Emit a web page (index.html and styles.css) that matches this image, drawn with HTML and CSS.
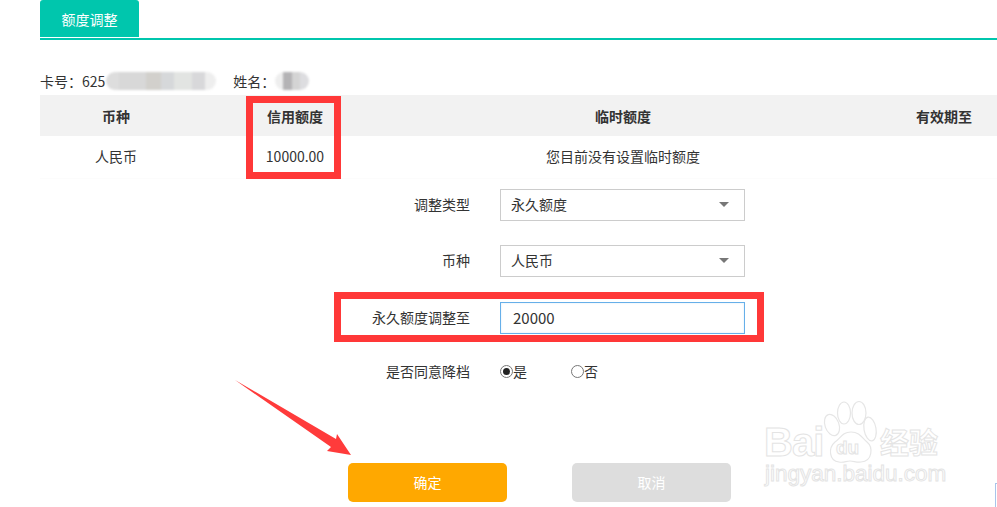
FILE: index.html
```html
<!DOCTYPE html>
<html lang="zh-CN">
<head>
<meta charset="utf-8">
<title>额度调整</title>
<link rel="stylesheet" href="styles.css">
</head>
<body>
<div class="page">
  <nav class="tabs"><span class="tab">额度调整</span></nav>
  <div class="info">
    <span>卡号：625</span><span class="blur blur-card"></span>
    <span class="name-label">姓名：</span><span class="blur blur-name"></span>
  </div>
  <div class="table table-head">
    <span>币种</span><span>信用额度</span><span>临时额度</span><span class="col-last">有效期至</span>
  </div>
  <div class="table table-row">
    <span>人民币</span><span>10000.00</span><span>您目前没有设置临时额度</span><span class="col-last"></span>
  </div>
  <form class="form">
    <div class="field">
      <label class="label">调整类型</label>
      <div class="control select">永久额度<i class="caret"></i></div>
    </div>
    <div class="field">
      <label class="label">币种</label>
      <div class="control select">人民币<i class="caret"></i></div>
    </div>
    <div class="field field-amount">
      <label class="label">永久额度调整至</label>
      <div class="control amount">20000</div>
    </div>
    <div class="field field-radio">
      <label class="label">是否同意降档</label>
      <div class="radios">
        <span class="radio-item"><i class="radio checked"></i>是</span>
        <span class="radio-item"><i class="radio"></i>否</span>
      </div>
    </div>
  </form>
  <div class="actions">
    <button type="button" class="btn btn-ok">确定</button>
    <button type="button" class="btn btn-cancel">取消</button>
  </div>
</div>

<div class="mark mark-credit"></div>
<div class="mark mark-amount"></div>
<svg class="arrow" width="130" height="85" viewBox="0 0 130 85"><polygon points="5,0 106,59 107,54 121,75 97,71 101,67" fill="#ff3b3b"/></svg>

<div class="watermark">
  <svg class="paw" width="60" height="64" viewBox="0 0 60 64" fill="#fff" stroke="#e6e6e6" stroke-width="1.2">
    <ellipse cx="9" cy="25" rx="7" ry="11" transform="rotate(-20 9 25)"/>
    <ellipse cx="21" cy="13" rx="6.5" ry="11"/>
    <ellipse cx="36" cy="13" rx="7" ry="11.5"/>
    <ellipse cx="47" cy="29" rx="6" ry="12" transform="rotate(-10 47 29)"/>
    <path d="M28 32c9 0 11 6 16 10 6 5 6 19-6 20-5 .5-7-1-11-1s-6 2-11 1C6 61 5 48 12 42c6-4 7-10 16-10z"/>
  </svg>
  <span class="wm-bai">Bai</span>
  <span class="wm-du">du</span>
  <span class="wm-jy">经验</span>
  <span class="wm-url">jingyan.baidu.com</span>
</div>
<div class="corner"></div>
</body>
</html>
```
FILE: styles.css
```css
* { box-sizing: border-box; }
html, body { margin: 0; height: 507px; overflow: hidden; background: #fff; }
body {
  position: relative;
  font-family: "Noto Sans CJK SC", "Noto Sans", sans-serif;
  font-size: 14px;
  color: #333;
}
.page { padding-left: 40px; }

.tabs { height: 40px; border-bottom: 2px solid #00c6ad; }
.tab {
  display: block;
  width: 99px;
  height: 37px;
  line-height: 39px;
  text-align: center;
  color: #fff;
  background: #00c6ad;
  border-radius: 3px 3px 0 0;
}

.info {
  display: flex;
  align-items: center;
  height: 26px;
  margin-top: 29px;
  padding-bottom: 2px;
  line-height: 24px;
}
.name-label { margin-left: 1px; }
.blur { display: block; height: 18px; border-radius: 9px; filter: blur(1px); }
.blur-card {
  width: 110px;
  margin-right: 16px;
  margin-left: 1px;
  background: linear-gradient(90deg, #ddd 0 12%, #d8d8d8 12% 36%, #d2d0cc 36% 50%, #d6d8da 50% 62%, #e2e4e2 62% 78%, #d8d8da 78% 90%, #eee 90%);
}
.blur-name {
  width: 34px;
  background: linear-gradient(90deg, #eee 0 25%, #b4b3b5 25% 50%, #d4d4d4 50% 75%, #dddde0 75%);
}

.table {
  display: grid;
  grid-template-columns: 152px 206px 450px 149px;
  align-items: center;
  text-align: center;
}
.table-head { height: 41px; background: #f2f2f2; font-weight: 700; }
.table-row { height: 43px; padding-bottom: 2px; border-bottom: 1px solid #fcfcfc; }
.col-last { padding-left: 43px; white-space: nowrap; }

.form { display: flex; flex-direction: column; gap: 24px; margin-top: 10px; }
.field { display: flex; align-items: center; height: 32px; }
.label { width: 430px; text-align: right; padding-bottom: 3px; }
.control {
  position: relative;
  width: 245px;
  height: 32px;
  margin-left: 30px;
  border: 1px solid #ccc;
  background: #fff;
  line-height: 29px;
}
.select { padding-left: 10px; }
.caret {
  position: absolute;
  top: 12px;
  right: 15px;
  border-style: solid;
  border-width: 5px 5px 0;
  border-color: #777 transparent transparent;
}
.field-amount { margin-top: 1px; }
.amount {
  padding-left: 12px;
  border-color: #66afe9;
  font-size: 15px;
  box-shadow: inset 0 0 2px rgba(102, 175, 233, .25);
}

.field-radio { height: 20px; margin-top: 4px; }
.field-radio .label { padding-bottom: 3px; }
.radios { display: flex; margin-left: 30px; width: 245px; line-height: 18px; padding-bottom: 2px; }
.radio-item { display: flex; align-items: center; width: 71px; }
.radio {
  position: relative;
  width: 13px;
  height: 13px;
  border: 1px solid #777;
  border-radius: 50%;
  background: #fff;
}
.radio.checked::after {
  content: "";
  position: absolute;
  inset: 2px;
  border-radius: 50%;
  background: #222;
}

.actions { display: flex; gap: 65px; margin-top: 81px; padding-left: 308px; }
.btn {
  width: 159px;
  height: 39px;
  padding: 0 0 2px;
  border: 0;
  border-radius: 5px;
  color: #fff;
  font: inherit;
}
.btn-ok { background: #ffa800; }
.btn-cancel { background: #ddd; }

/* screenshot annotations lying over the form */
.mark { position: absolute; border: 7px solid #ff3838; }
.mark-credit { left: 246px; top: 96px; width: 95px; height: 83px; }
.mark-amount { left: 334px; top: 292px; width: 430px; height: 50px; }
.arrow { position: absolute; left: 230px; top: 380px; }

.watermark { position: absolute; left: 760px; top: 398px; width: 190px; height: 92px; }
.paw { position: absolute; left: 63px; top: 2px; }
.wm-bai, .wm-du, .wm-jy, .wm-url {
  position: absolute;
  color: #fff;
  -webkit-text-stroke: 1px #e4e4e4;
  white-space: nowrap;
  line-height: 1;
}
.wm-bai { left: 4px; top: 24px; font: 700 40px/1 "Liberation Sans", sans-serif; letter-spacing: -1px; }
.wm-du { left: 76px; top: 40px; font: 700 19px/1 "Liberation Sans", sans-serif; }
.wm-jy { left: 120px; top: 29px; font: 700 29px/1 "Noto Sans CJK SC", sans-serif; }
.wm-url { left: 5px; top: 65px; font: 400 22.5px/1 "Liberation Sans", sans-serif; }

.corner {
  position: absolute;
  left: 995px;
  top: 483px;
  width: 2px;
  height: 24px;
  border-left: 1px solid #a9c4ea;
  border-top: 1px solid #a9c4ea;
}
```
